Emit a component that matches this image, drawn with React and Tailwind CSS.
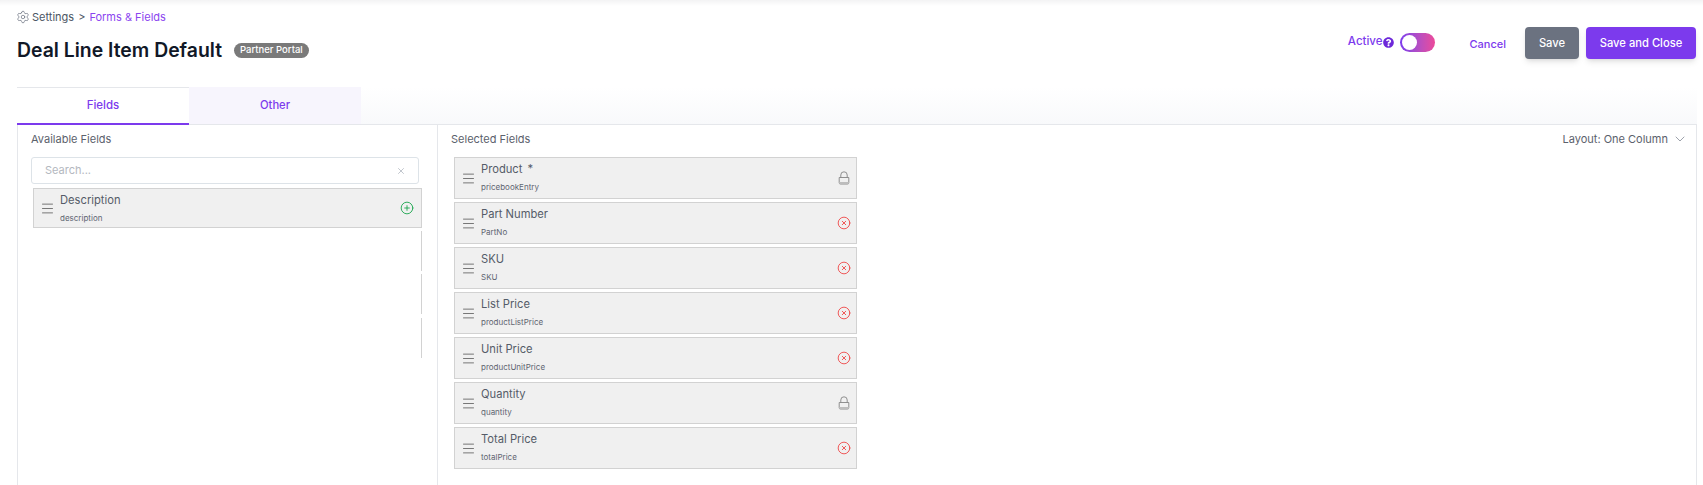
import React from 'react';
import { Settings, Menu, CirclePlus, CircleX, ChevronDown, X } from 'lucide-react';
import { FaQuestionCircle } from 'react-icons/fa';

const selected = [
  { label: 'Product', name: 'pricebookEntry', locked: true, required: true },
  { label: 'Part Number', name: 'PartNo' },
  { label: 'SKU', name: 'SKU' },
  { label: 'List Price', name: 'productListPrice' },
  { label: 'Unit Price', name: 'productUnitPrice' },
  { label: 'Quantity', name: 'quantity', locked: true },
  { label: 'Total Price', name: 'totalPrice' },
];

// Padlock with the shaded lower edge of the body
function LockIcon() {
  return (
    <svg viewBox="0 0 12 14" className="w-[12px] h-[14px] mr-[1px]" fill="none" stroke="#858585" strokeWidth="0.9">
      <path d="M2.8 6.5V4a3.2 3.2 0 0 1 6.4 0v2.5" />
      <path d="M1.2 6.5h9.6v5.3a1.2 1.2 0 0 1-1.2 1.2H2.4a1.2 1.2 0 0 1-1.2-1.2z" />
      <path d="M1.2 11h9.6v1a1 1 0 0 1-1 1H2.2a1 1 0 0 1-1-1z" fill="#bdbdbd" stroke="none" />
    </svg>
  );
}

function FieldRow({ label, name, required, children, className }) {
  return (
    <div className={`flex items-center h-[42px] bg-[#f0f0f0] border border-[#d2d2d2] pl-[6px] pr-[5px] ${className || ''}`}>
      <Menu className="w-[15px] h-[15px] text-[#555] shrink-0" strokeWidth={1.25} />
      <div className="ml-[5px] flex-1 min-w-0 self-start">
        <div className="text-[11.2px] leading-[16px] mt-[3px] text-[#555c68]">
          {label}
          {required && <span className="ml-[5px]">*</span>}
        </div>
        <div className="text-[8px] leading-[10px] mt-[5px] text-[#5f6570]">{name}</div>
      </div>
      {children}
    </div>
  );
}

export default function App() {
  return (
    <div className="relative h-[485px] w-[1703px] overflow-hidden bg-white font-['Inter',sans-serif]">
      {/* Top shade */}
      <div className="h-[6px] bg-gradient-to-b from-[#f3f3f4] to-white" />

      <div className="flex flex-col px-[17px] pr-[6px] h-[479px]">
        {/* Header */}
        <div className="flex justify-between h-[81px]">
          <div>
            <div className="flex items-center h-[20px] mt-[1px] text-[11px] text-[#4b5563]">
              <Settings className="w-[14px] h-[14px] text-[#6b7280] -ml-[1px] mr-[2px]" strokeWidth={1.25} />
              <span>Settings</span>
              <span className="mx-[4px]">&gt;</span>
              <span className="text-[#8b45ef]">Forms &amp; Fields</span>
            </div>
            <div className="flex items-center mt-[9px]">
              <h1 className="text-[19.4px] leading-[28px] font-semibold text-[#111827]">Deal Line Item Default</h1>
              <span className="ml-[12px] flex items-center h-[15px] px-[6px] rounded-full bg-[#7a7a7a] text-white text-[9.5px] font-medium">Partner Portal</span>
            </div>
          </div>
          <div className="flex items-start pt-[21px] mr-[1px]">
            <div className="flex items-center h-[32px] text-[11.5px] font-medium text-[#7c3aed] -mt-[1px]">
              Active
              <FaQuestionCircle className="w-[11px] h-[11px] ml-[1px] text-[#6d28d9]" />
              <div className="ml-[6px] w-[35px] h-[19px] rounded-full bg-gradient-to-r from-[#7c3aed] to-[#ec4899] p-[2px]">
                <div className="w-[15px] h-[15px] rounded-full bg-white" />
              </div>
            </div>
            <span className="ml-[34px] mt-[8px] text-[11px] font-medium leading-[18px] text-[#7c3aed]">Cancel</span>
            <button className="ml-[19px] w-[54px] h-[32px] rounded-[4px] bg-[#6b7280] text-white text-[11.2px] font-medium shadow-md">Save</button>
            <button className="ml-[7px] w-[110px] h-[32px] rounded-[4px] bg-[#7c3aed] text-white text-[11.2px] font-medium shadow-md">Save and Close</button>
          </div>
        </div>

        {/* Tabs */}
        <div className="flex h-[38px] bg-gradient-to-b from-white to-[#f8f9fb]">
          <div className="flex items-center justify-center w-[172px] bg-white border-t border-[#e5e7eb] border-b-2 border-b-[#7c3aed] text-[11.5px] font-medium text-[#7c3aed]">Fields</div>
          <div className="flex items-center justify-center w-[172px] bg-[#f7f5fd] border-b border-[#e5e7eb] text-[11.2px] font-medium text-[#7c3aed]">Other</div>
          <div className="flex-1 border-b border-[#e5e7eb]" />
        </div>

        {/* Panels */}
        <div className="flex flex-1 border-l border-r border-[#e5e7eb] min-h-0">
          <div className="w-[420px] shrink-0 border-r border-[#e5e7eb] pl-[13px] pr-[15px]">
            <div className="text-[11px] leading-[16px] text-[#5b616c] mt-[6px]">Available Fields</div>
            <div className="flex items-center justify-between h-[27px] w-[388px] mt-[10px] pl-[13px] pr-[12px] rounded-[3px] border border-[#dde3e8] text-[11px] text-[#b4b8c0]">
              Search...
              <X className="w-[10px] h-[10px] text-[#9ca3af]" strokeWidth={1.5} />
            </div>
            <div className="w-[389px] ml-[2px] mt-[4px]">
              <FieldRow label="Description" name="description" className="!h-[40px]">
                <CirclePlus className="w-[14px] h-[14px] mr-[2px] text-[#16a34a]" strokeWidth={1.5} />
              </FieldRow>
              <div className="h-[40px] mt-[3px] border-r border-[#d2d2d2]" />
              <div className="h-[40px] mt-[3px] border-r border-[#d2d2d2]" />
              <div className="h-[40px] mt-[4px] border-r border-[#d2d2d2]" />
            </div>
          </div>
          <div className="flex-1 min-w-0 pl-[13px] pr-[8px]">
            <div className="flex justify-between text-[11px] leading-[16px] text-[#5b616c] mt-[6px]">
              <span>Selected Fields</span>
              <span className="flex items-center">
                Layout: One Column
                <ChevronDown className="w-[16px] h-[16px] ml-[4px] text-[#6b7280]" strokeWidth={1} />
              </span>
            </div>
            <div className="flex flex-col gap-[3px] w-[403px] ml-[3px] mt-[10px]">
              {selected.map((f) => (
                <FieldRow key={f.name} label={f.label} name={f.name} required={f.required}>
                  {f.locked
                    ? <LockIcon />
                    : <CircleX className="w-[14px] h-[14px] text-[#ef4444]" strokeWidth={1.5} />}
                </FieldRow>
              ))}
            </div>
          </div>
        </div>
      </div>
    </div>
  );
}
